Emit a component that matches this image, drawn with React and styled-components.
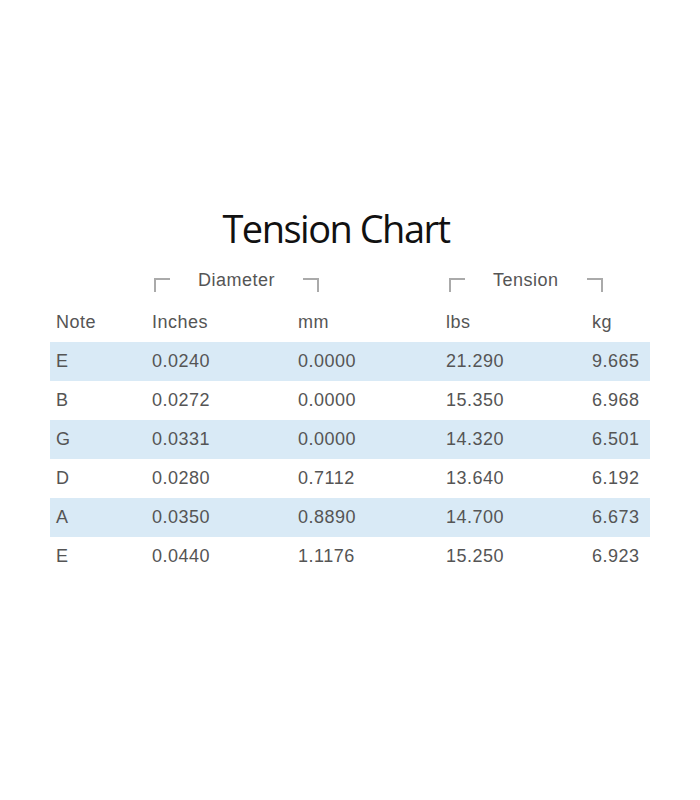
import styled, { createGlobalStyle } from 'styled-components'

const GlobalStyle = createGlobalStyle`
  body {
    margin: 0;
    background: #ffffff;
    font-family: "Liberation Sans", Arial, sans-serif;
  }
`

const Page = styled.div`
  width: 600px;
  margin: 0 auto;
  padding-top: 209px;
`

const Title = styled.h1`
  margin: 0 0 20px;
  padding-right: 28px;
  font-family: "Open Sans", sans-serif;
  font-size: 38px;
  font-weight: 400;
  line-height: 38px;
  letter-spacing: -1.5px;
  text-align: center;
  color: #111;
`

const Grid = styled.div`
  display: grid;
  grid-template-columns: 96px 146px 148px 146px 64px;
`

const GroupRow = styled(Grid)`
  height: 36px;
`

const Group = styled.div`
  grid-column: span 2;
  display: flex;
  align-items: flex-start;
  gap: 28px;
  padding-left: ${({ $offset }) => $offset}px;
`

const GroupLabel = styled.span`
  font-size: 18px;
  line-height: 26px;
  letter-spacing: 0.5px;
  color: #555;
`

const Bracket = styled.span`
  flex: none;
  width: 14px;
  height: 12px;
  margin-top: 11px;
  border-top: 2px solid #aaa;
  ${({ $side }) =>
    $side === 'left' ? 'border-left: 2px solid #aaa;' : 'border-right: 2px solid #aaa;'}
`

const Row = styled(Grid)`
  height: 39px;
  background: ${({ $shaded }) => ($shaded ? '#d9eaf6' : 'transparent')};
`

const Cell = styled.div`
  padding-left: 6px;
  font-size: 18px;
  line-height: 39px;
  letter-spacing: 0.5px;
  color: #555;
  white-space: nowrap;
`

const headers = ['Note', 'Inches', 'mm', 'lbs', 'kg']

const rows = [
  ['E', '0.0240', '0.0000', '21.290', '9.665'],
  ['B', '0.0272', '0.0000', '15.350', '6.968'],
  ['G', '0.0331', '0.0000', '14.320', '6.501'],
  ['D', '0.0280', '0.7112', '13.640', '6.192'],
  ['A', '0.0350', '0.8890', '14.700', '6.673'],
  ['E', '0.0440', '1.1176', '15.250', '6.923'],
]

function GroupHeader({ label, offset }) {
  return (
    <Group $offset={offset}>
      <Bracket $side="left" />
      <GroupLabel>{label}</GroupLabel>
      <Bracket $side="right" />
    </Group>
  )
}

export default function App() {
  return (
    <Page>
      <GlobalStyle />
      <Title>Tension Chart</Title>
      <GroupRow>
        <div />
        <GroupHeader label="Diameter" offset={8} />
        <GroupHeader label="Tension" offset={9} />
      </GroupRow>
      <Row>
        {headers.map((h) => (
          <Cell key={h}>{h}</Cell>
        ))}
      </Row>
      {rows.map((row, i) => (
        <Row key={i} $shaded={i % 2 === 0}>
          {row.map((v, j) => (
            <Cell key={j}>{v}</Cell>
          ))}
        </Row>
      ))}
    </Page>
  )
}
